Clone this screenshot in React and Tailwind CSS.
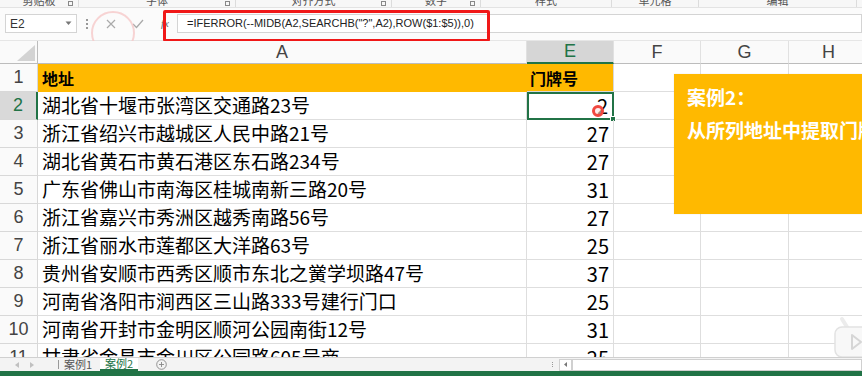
import React from "react";

const cjk = "font-['Noto_Sans_CJK_SC','Noto_Sans',sans-serif]";

const groups = [
  { label: "剪贴板", w: "w-[79px]", launcher: true },
  { label: "字体", w: "w-[157px]", launcher: true },
  { label: "对齐方式", w: "w-[156px]", launcher: true },
  { label: "数字", w: "w-[89px]", launcher: true },
  { label: "样式", w: "w-[131px]", launcher: false },
  { label: "单元格", w: "w-[87px]", launcher: false },
  { label: "编辑", w: "w-[158px]", launcher: false },
];

const rows = [
  ["湖北省十堰市张湾区交通路23号", "2"],
  ["浙江省绍兴市越城区人民中路21号", "27"],
  ["湖北省黄石市黄石港区东石路234号", "27"],
  ["广东省佛山市南海区桂城南新三路20号", "31"],
  ["浙江省嘉兴市秀洲区越秀南路56号", "27"],
  ["浙江省丽水市莲都区大洋路63号", "25"],
  ["贵州省安顺市西秀区顺市东北之黉学坝路47号", "37"],
  ["河南省洛阳市涧西区三山路333号建行门口", "25"],
  ["河南省开封市金明区顺河公园南街12号", "31"],
  ["甘肃省金昌市金川区公园路605号商", "25"],
];

function RibbonLabels() {
  return (
    <div className="h-[8px] flex overflow-hidden border-b border-[#e3e3e3] bg-[#f7f7f7]">
      {groups.map((g) => (
        <div key={g.label} className={`${g.w} relative shrink-0 border-r border-[#dcdcdc]`}>
          <div className={`absolute left-0 right-0 -top-[7px] text-center text-[11px] leading-[14px] text-[#555] ${cjk}`}>
            {g.label}
          </div>
          {g.launcher && (
            <div className="absolute right-[5px] top-[1px] w-[5px] h-[5px] border border-[#888]" />
          )}
        </div>
      ))}
    </div>
  );
}

function FormulaBar() {
  return (
    <div className="h-[33px] relative bg-[#fbfbfb] border-b border-[#e6e6e6]">
      <div className="flex items-center pt-[6px] h-[25px]">
        <div className="ml-[5px] w-[72px] h-[19px] bg-white border border-[#d4d4d4] flex items-center justify-between px-[4px]">
          <span className="text-[12px] text-[#333] font-['Liberation_Sans',sans-serif]">E2</span>
          <svg width="7" height="5" viewBox="0 0 7 5">
            <path d="M0.5 0.5 L3.5 4 L6.5 0.5 Z" fill="#777" />
          </svg>
        </div>
        <div className="ml-[9px] flex flex-col gap-[2px]">
          <span className="w-[2px] h-[2px] bg-[#999]" />
          <span className="w-[2px] h-[2px] bg-[#999]" />
          <span className="w-[2px] h-[2px] bg-[#999]" />
        </div>
        <div className="ml-[16px] w-[14px] flex justify-center">
          <svg width="10" height="10" viewBox="0 0 10 10">
            <path d="M1 1 L9 9 M9 1 L1 9" stroke="#aaa" strokeWidth="1.2" />
          </svg>
        </div>
        <div className="ml-[13px] w-[14px] flex justify-center">
          <svg width="12" height="10" viewBox="0 0 12 10">
            <path d="M1 5 L4.5 8.5 L11 1" stroke="#aaa" strokeWidth="1.3" fill="none" />
          </svg>
        </div>
        <div className="ml-[13px] w-[14px] flex justify-center text-[11px] italic text-[#666] font-['Liberation_Serif',serif]">
          fx
        </div>
        <div className="ml-[5px] flex-1 h-[19px] bg-white border border-[#d4d4d4] flex items-center pl-[9px]">
          <span className="text-[11px] text-[#222] font-['Liberation_Sans',sans-serif]">
            =IFERROR(--MIDB(A2,SEARCHB("?",A2),ROW($1:$5)),0)
          </span>
        </div>
      </div>
      <div className="absolute left-[163px] top-[2px] w-[327px] h-[32px] border-[3px] border-[#f01818] rounded-[2px]" />
      <div className="absolute left-[91px] top-[3px] w-[44px] h-[44px] rounded-full border-[2px] border-[#f6c9c9] opacity-80" />
    </div>
  );
}

function HeaderCell({ children, active }) {
  return (
    <div
      className={`flex items-center justify-center text-[18px] font-['Liberation_Sans',sans-serif] border-r border-[#e1e1e1] ${
        active ? "bg-[#d6d6d6] text-[#217346] border-b-2 border-b-[#217346]" : "bg-[#fafafa] text-[#444] border-b border-b-[#bcbcbc]"
      }`}
    >
      {children}
    </div>
  );
}

function Grid() {
  return (
    <div className="flex-1 relative overflow-hidden bg-white">
      <div className="grid grid-cols-[38px_489px_87px_87px_88px_80px] grid-rows-[23px] auto-rows-[28px]">
        <div className="bg-[#fafafa] border-r border-b border-[#bcbcbc] flex items-end justify-end pr-[2px] pb-[2px]">
          <svg width="18" height="16" viewBox="0 0 18 16">
            <path d="M18 0 L18 16 L0 16 Z" fill="#d3d3d3" />
          </svg>
        </div>
        <HeaderCell>A</HeaderCell>
        <HeaderCell active>E</HeaderCell>
        <HeaderCell>F</HeaderCell>
        <HeaderCell>G</HeaderCell>
        <HeaderCell>H</HeaderCell>

        <div className="bg-[#fafafa] border-r border-b border-[#d8d8d8] flex items-center justify-center text-[18px] text-[#444] font-['Liberation_Sans',sans-serif]">1</div>
        <div className={`bg-[#ffb900] flex items-center pl-[4px] text-[16px] font-bold text-black ${cjk}`}>地址</div>
        <div className={`bg-[#ffb900] border-r border-b border-[#d8d8d8] flex items-center pl-[3px] text-[16px] font-bold text-black ${cjk}`}>门牌号</div>
        <div className="border-r border-b border-[#dedede]" />
        <div className="border-r border-b border-[#dedede]" />
        <div className="border-b border-[#dedede]" />

        {rows.map(([addr, num], i) => {
          const n = i + 2;
          const sel = n === 2;
          return (
            <React.Fragment key={n}>
              <div
                className={`border-b border-[#d8d8d8] flex items-center justify-center text-[18px] font-['Liberation_Sans',sans-serif] ${
                  sel ? "bg-[#d9d9d9] text-[#217346] border-r-2 border-r-[#217346]" : "bg-[#fafafa] text-[#444] border-r border-r-[#d8d8d8]"
                }`}
              >
                {n}
              </div>
              <div className={`border-r border-b border-[#dedede] flex items-center pl-[4px] text-[19px] text-black whitespace-nowrap overflow-hidden ${cjk}`}>
                {addr}
              </div>
              <div
                className={`relative flex items-center justify-end pr-[4px] text-[20px] text-black ${cjk} ${
                  sel ? "border-2 border-[#217346]" : "border-r border-b border-[#dedede]"
                }`}
              >
                {num}
                {sel && (
                  <>
                    <span className="absolute -right-[4px] -bottom-[4px] w-[6px] h-[6px] bg-[#217346] border border-white" />
                    <span className="absolute left-[63px] top-[11px] w-[12px] h-[12px] rounded-full border-[3px] border-[#f0483f] bg-[#fde2e2]/60" />
                  </>
                )}
              </div>
              <div className="border-r border-b border-[#dedede]" />
              <div className="border-r border-b border-[#dedede]" />
              <div className="border-b border-[#dedede]" />
            </React.Fragment>
          );
        })}
      </div>

      <div className="absolute left-[674px] top-[33px] w-[220px] h-[140px] bg-[#ffb900] pl-[13px] pt-[11px] shadow-[0_0_1px_rgba(0,0,0,0.15)]">
        <div className={`text-[19px] font-bold text-white leading-[24px] ${cjk}`}>案例2：</div>
        <div className={`mt-[9px] text-[19px] font-bold text-white leading-[24px] whitespace-nowrap ${cjk}`}>从所列地址中提取门牌号</div>
      </div>

      <svg className="absolute left-[832px] top-[274px]" width="40" height="48" viewBox="0 0 40 48">
        <path d="M10 4 L15 12" stroke="#ececec" strokeWidth="4" strokeLinecap="round" />
        <rect x="3" y="12" width="40" height="30" rx="7" fill="#f8f8f8" stroke="#e2e2e2" strokeWidth="1.5" />
        <path d="M20 20 L29 27 L20 34 Z" fill="none" stroke="#d6d6d6" strokeWidth="2" strokeLinejoin="round" />
      </svg>
    </div>
  );
}

function SheetTabs() {
  return (
    <div className="h-[14px] flex items-stretch bg-[#f3f3f3] border-t border-[#d0d0d0] leading-none">
      <div className="w-[58px] flex items-center pl-[15px] gap-[11px]">
        <svg width="4" height="6" viewBox="0 0 4 6"><path d="M4 0 L0 3 L4 6 Z" fill="#c0c0c0" /></svg>
        <svg width="4" height="6" viewBox="0 0 4 6"><path d="M0 0 L4 3 L0 6 Z" fill="#c0c0c0" /></svg>
      </div>
      <div className="w-px bg-[#999] my-[2px]" />
      <div className={`px-[5px] flex items-center text-[11px] leading-none text-[#555] ${cjk}`}>案例1</div>
      <div className={`ml-[3px] px-[5px] flex items-center text-[11px] leading-none text-[#217346] bg-white border-b-2 border-[#217346] ${cjk}`}>案例2</div>
      <div className="ml-[18px] flex items-center">
        <svg width="11" height="11" viewBox="0 0 11 11">
          <circle cx="5.5" cy="5.5" r="4.8" fill="none" stroke="#888" strokeWidth="0.9" />
          <path d="M5.5 3 V8 M3 5.5 H8" stroke="#888" strokeWidth="0.9" />
        </svg>
      </div>
      <div className="flex-1" />
      <div className="w-[310px] flex items-center">
        <div className="flex flex-col gap-[1px] mr-[6px]">
          <span className="w-[1px] h-[1px] bg-[#999]" />
          <span className="w-[1px] h-[1px] bg-[#999]" />
          <span className="w-[1px] h-[1px] bg-[#999]" />
        </div>
        <div className="w-[13px] h-[12px] bg-white border border-[#d0d0d0] flex items-center justify-center">
          <svg width="3" height="5" viewBox="0 0 3 5"><path d="M3 0 L0 2.5 L3 5 Z" fill="#777" /></svg>
        </div>
        <div className="flex-1 h-[12px] bg-white border border-[#d0d0d0]" />
      </div>
    </div>
  );
}

export default function App() {
  return (
    <div className="w-[862px] h-[376px] overflow-hidden bg-white flex flex-col">
      <RibbonLabels />
      <FormulaBar />
      <Grid />
      <SheetTabs />
      <div className="h-[5px] bg-[#217346]" />
    </div>
  );
}
